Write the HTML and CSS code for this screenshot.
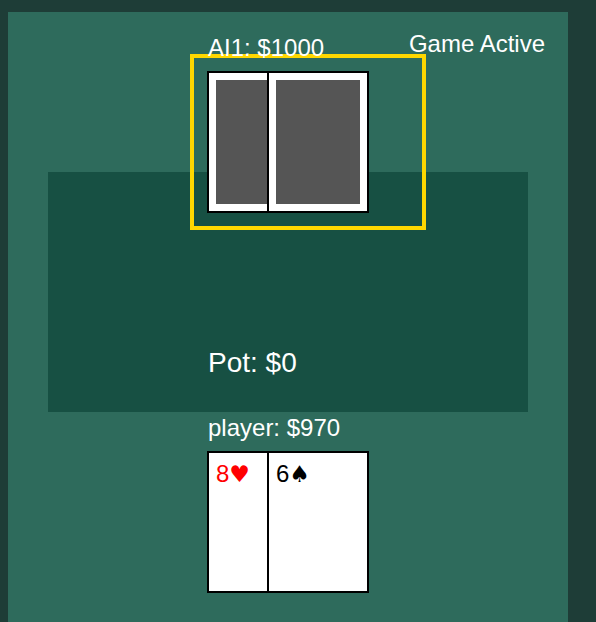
FILE: index.html
```html
<!DOCTYPE html>
<html>
<head>
<meta charset="utf-8">
<link rel="stylesheet" href="styles.css">
</head>
<body>
<div class="game">
  <div class="status">Game Active</div>
  <div class="table">
    <div class="pot">Pot: $0</div>
  </div>
  <div class="seat seat-ai">
    <div class="label">AI1: $1000</div>
    <div class="hand active">
      <div class="card back"></div>
      <div class="card back"></div>
    </div>
  </div>
  <div class="seat seat-player">
    <div class="label">player: $970</div>
    <div class="hand">
      <div class="card red">8<span class="suit">♥</span></div>
      <div class="card black">6<span class="suit">♠</span></div>
    </div>
  </div>
</div>
</body>
</html>
```
FILE: styles.css
```css
html, body {
  margin: 0;
  padding: 0;
}
body {
  background: #1e3d37;
  padding: 12px 8px 0;
  font-family: "Liberation Sans", Arial, sans-serif;
  color: #ffffff;
  overflow: hidden;
  height: 622px;
  box-sizing: border-box;
}
.game {
  position: relative;
  width: 560px;
  height: 610px;
  background: #2e6b5c;
  padding-top: 160px;
  box-sizing: border-box;
}
.status {
  position: absolute;
  top: 18px;
  right: 23px;
  font-size: 24px;
  line-height: 27px;
}
.table {
  margin: 0 40px;
  height: 240px;
  background: #175043;
  padding: 175px 0 0 160px;
  box-sizing: border-box;
}
.pot {
  font-size: 28px;
  line-height: 31px;
}
.seat {
  position: absolute;
  left: 199px;
}
.seat-ai { top: 22px; }
.seat-player { top: 402px; }
.label {
  position: relative;
  z-index: 1;
  font-size: 24px;
  line-height: 27px;
  margin-bottom: 10px;
  padding-left: 1px;
}
.hand {
  display: flex;
  width: 202px;
  margin: -17px;
  padding: 13px;
  border: 4px solid transparent;
}
.hand.active {
  border-color: #ffd700;
}
.card {
  flex: none;
  box-sizing: border-box;
  width: 102px;
  height: 142px;
  border: 2px solid #000;
  background: #fff;
  padding: 7px 7px;
  font-size: 24px;
  line-height: 27px;
}
.card + .card {
  margin-left: -42px;
}
.card.back {
  padding: 0;
  background: #555555;
  box-shadow: inset 0 0 0 7px #fff;
}
.suit {
  font-family: "DejaVu Sans", sans-serif;
  font-size: 23px;
}
.red { color: #ff0000; }
.black { color: #000000; }
```
